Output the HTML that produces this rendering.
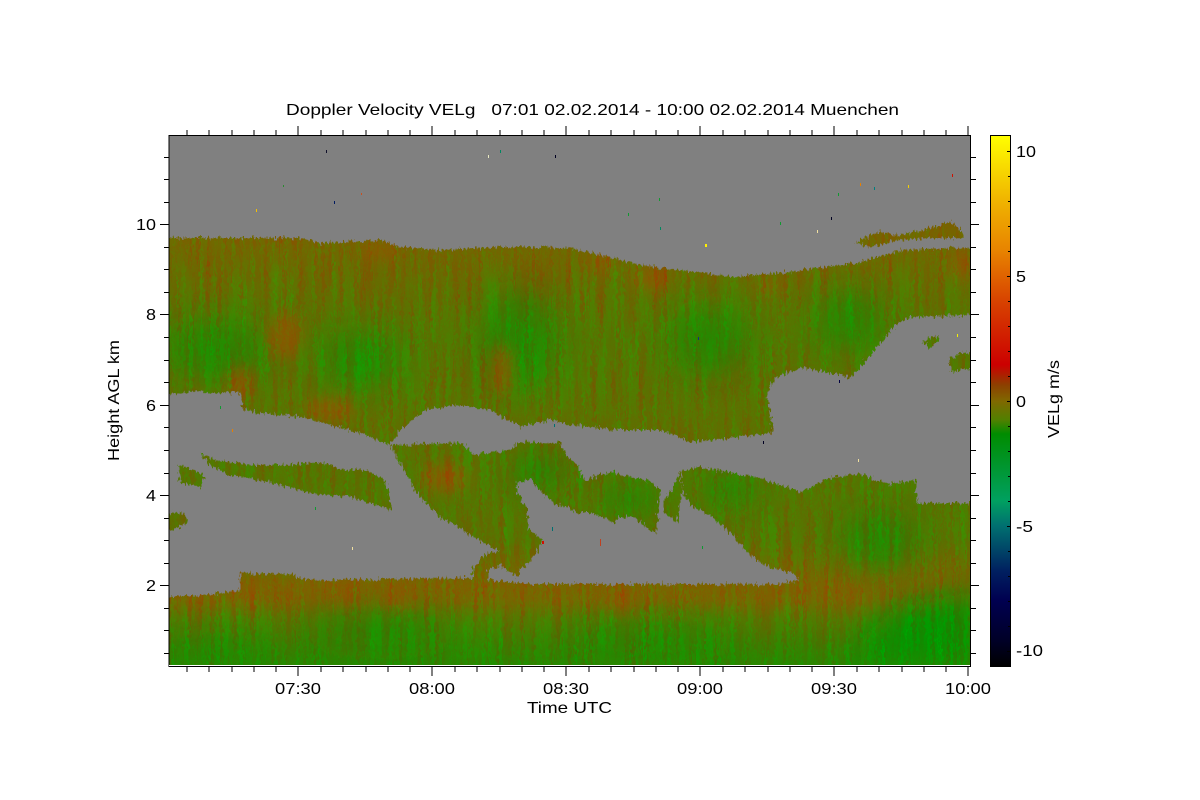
<!DOCTYPE html>
<html>
<head>
<meta charset="utf-8">
<title>Doppler Velocity VELg</title>
<style>
html,body{margin:0;padding:0;background:#fff;width:1200px;height:800px;overflow:hidden}
svg{display:block}
text{font-family:"Liberation Sans",Arial,sans-serif;font-size:16px;fill:#000}
</style>
</head>
<body>
<svg width="1200" height="800" viewBox="0 0 1200 800" xmlns="http://www.w3.org/2000/svg">
<defs>
<linearGradient id="base" gradientUnits="userSpaceOnUse" x1="0" y1="135" x2="0" y2="666">
<stop offset="0" stop-color="#746600"/>
<stop offset="0.198" stop-color="#746600"/>
<stop offset="0.31" stop-color="#5e7100"/>
<stop offset="0.386" stop-color="#527800"/>
<stop offset="0.46" stop-color="#597300"/>
<stop offset="0.556" stop-color="#5d7100"/>
<stop offset="0.65" stop-color="#557500"/>
<stop offset="0.763" stop-color="#587400"/>
<stop offset="0.847" stop-color="#7c6300"/>
<stop offset="0.876" stop-color="#776600"/>
<stop offset="0.913" stop-color="#537800"/>
<stop offset="0.96" stop-color="#3a7f00"/>
<stop offset="1" stop-color="#2a8600"/>
</linearGradient>
<linearGradient id="cb" x1="0" y1="0" x2="0" y2="1">
<stop offset="0" stop-color="#ffff00"/>
<stop offset="0.122" stop-color="#f0b400"/>
<stop offset="0.216" stop-color="#e88400"/>
<stop offset="0.31" stop-color="#d84400"/>
<stop offset="0.432" stop-color="#cc0000"/>
<stop offset="0.47" stop-color="#8c4000"/>
<stop offset="0.5" stop-color="#806800"/>
<stop offset="0.536" stop-color="#508000"/>
<stop offset="0.562" stop-color="#008c00"/>
<stop offset="0.688" stop-color="#00a060"/>
<stop offset="0.735" stop-color="#007070"/>
<stop offset="0.82" stop-color="#002060"/>
<stop offset="0.876" stop-color="#000050"/>
<stop offset="0.95" stop-color="#000028"/>
<stop offset="1" stop-color="#000000"/>
</linearGradient>
<clipPath id="plot"><rect x="169" y="135" width="801" height="531"/></clipPath>
<clipPath id="cloud">
<polygon points="160,238 300,238 320,243 380,240 400,247 440,250 500,247 570,248 600,255 640,265 680,270 735,277 790,272 860,262 900,250 980,247 980,315 910,317 895,325 880,345 850,378 830,373 800,367 775,378 767,393 773,433 740,437 692,442 660,430 620,430 570,425 550,420 520,427 490,410 455,405 425,410 400,430 390,445 360,433 300,417 270,414 243,410 240,393 190,392 160,395"/>
<polygon points="390,445 463,443 473,455 510,450 517,442 560,443 567,457 580,467 583,480 613,472 653,483 660,490 658,513 657,533 650,530 633,517 620,517 613,523 593,513 580,513 553,503 530,480 517,483 517,493 528,510 528,528 543,540 530,563 520,570 517,577 500,565 488,570 488,580 473,580 473,567 487,553 500,552 480,540 440,517 417,493 400,463"/>
<polygon points="673,487 680,470 682,490 677,523 665,513 663,503"/>
<polygon points="160,596 200,596 240,590 240,573 290,574 305,580 470,578 490,580 530,584 780,584 800,580 790,572 770,568 750,555 730,532 705,512 690,505 682,490 682,470 700,467 730,472 760,478 800,492 830,478 860,474 890,484 915,480 918,503 980,503 980,675 160,675"/>
<polygon points="200,453 215,460 250,465 290,465 320,462 345,470 365,470 385,480 392,510 375,505 350,497 320,495 300,490 260,480 230,475 210,465"/>
<polygon points="178,465 195,470 205,478 200,487 180,483"/>
<polygon points="160,515 180,512 190,520 175,530 160,532"/>
<polygon points="855,242 880,232 900,235 930,228 950,222 962,230 962,238 930,238 900,240 870,247"/>
<polygon points="950,358 965,352 980,356 980,368 950,372"/>
<polygon points="922,342 935,335 940,340 930,348"/>
</clipPath>
<filter id="noise" filterUnits="userSpaceOnUse" x="150" y="120" width="850" height="570" color-interpolation-filters="sRGB">
<feTurbulence type="fractalNoise" baseFrequency="0.28 0.012" numOctaves="3" seed="7" result="t"/>
<feColorMatrix in="t" type="matrix" values="1 0 0 0 0  -1 0 0 0 1  0 0 0 0 0.5  0 0 0 0 1" result="n"/>
<feComposite in="SourceGraphic" in2="n" operator="arithmetic" k1="0" k2="1" k3="0.32" k4="-0.16"/>
</filter>
<filter id="rough" filterUnits="userSpaceOnUse" x="150" y="120" width="850" height="570" color-interpolation-filters="sRGB">
<feTurbulence type="fractalNoise" baseFrequency="0.5 0.18" numOctaves="2" seed="3" result="t"/>
<feColorMatrix in="t" type="matrix" values="1 0 0 0 0  0 1 0 0 0  0 0 1 0 0  0 0 0 0 1" result="m"/>
<feDisplacementMap in="SourceGraphic" in2="m" scale="9" xChannelSelector="R" yChannelSelector="G"/>
</filter>
<filter id="b8" x="-100%" y="-100%" width="300%" height="300%"><feGaussianBlur stdDeviation="7"/></filter>
<filter id="b14" filterUnits="userSpaceOnUse" x="100" y="100" width="1000" height="650"><feGaussianBlur stdDeviation="14"/></filter>
</defs>

<rect width="1200" height="800" fill="#fff"/>
<rect x="169" y="135" width="801" height="531" fill="#808080"/>

<g clip-path="url(#plot)">
<g filter="url(#rough)">
<g clip-path="url(#cloud)">
<g filter="url(#noise)">
<rect x="150" y="120" width="850" height="570" fill="url(#base)"/>
<g filter="url(#b14)" fill="#1c8a00" opacity="0.75">
<ellipse cx="850" cy="320" rx="34" ry="30"/>
<ellipse cx="520" cy="340" rx="38" ry="50"/>
<ellipse cx="215" cy="350" rx="50" ry="30"/>
<ellipse cx="360" cy="360" rx="40" ry="28"/>
<ellipse cx="880" cy="540" rx="40" ry="30"/>
<ellipse cx="710" cy="340" rx="40" ry="35"/>
<ellipse cx="540" cy="470" rx="30" ry="20"/>
<ellipse cx="630" cy="500" rx="30" ry="18"/>
<ellipse cx="730" cy="490" rx="28" ry="18"/>
<ellipse cx="380" cy="630" rx="70" ry="16"/>
<ellipse cx="210" cy="654" rx="50" ry="14"/>
<ellipse cx="650" cy="640" rx="80" ry="14"/>
</g>
<g filter="url(#b14)" fill="#0a8f00">
<polygon points="860,640 900,604 980,590 980,670 860,670"/>
</g>
<g fill="#8a5800" filter="url(#b8)" opacity="0.85">
<ellipse cx="503" cy="370" rx="11" ry="26"/>
<ellipse cx="650" cy="278" rx="18" ry="13"/>
<ellipse cx="600" cy="262" rx="15" ry="9"/>
<ellipse cx="240" cy="385" rx="12" ry="18"/>
<ellipse cx="285" cy="335" rx="18" ry="24"/>
<ellipse cx="620" cy="598" rx="15" ry="12"/>
<ellipse cx="400" cy="595" rx="15" ry="11"/>
<ellipse cx="340" cy="592" rx="12" ry="10"/>
<ellipse cx="250" cy="592" rx="15" ry="8"/>
<ellipse cx="330" cy="410" rx="25" ry="13"/>
<ellipse cx="445" cy="478" rx="25" ry="15"/>
<ellipse cx="770" cy="285" rx="12" ry="8"/>
<ellipse cx="960" cy="265" rx="12" ry="16"/>
<ellipse cx="380" cy="250" rx="20" ry="10"/>
</g>
</g>
</g>
</g>
<g>
<rect x="326" y="150" width="1" height="3" fill="#10102a"/>
<rect x="488" y="155" width="1" height="3" fill="#e8e8c0"/>
<rect x="500" y="150" width="1" height="3" fill="#008860"/>
<rect x="555" y="155" width="1" height="3" fill="#000020"/>
<rect x="283" y="185" width="1" height="2" fill="#2a8a30"/>
<rect x="334" y="201" width="1" height="3" fill="#001a60"/>
<rect x="361" y="193" width="1" height="2" fill="#c85020"/>
<rect x="256" y="209" width="1" height="3" fill="#f4c000"/>
<rect x="659" y="198" width="1" height="3" fill="#109a30"/>
<rect x="628" y="213" width="1" height="3" fill="#109a30"/>
<rect x="705" y="244" width="2" height="3" fill="#fff000"/>
<rect x="860" y="183" width="1" height="3" fill="#e88000"/>
<rect x="874" y="187" width="1" height="3" fill="#008080"/>
<rect x="908" y="185" width="1" height="3" fill="#f4d000"/>
<rect x="952" y="174" width="1" height="3" fill="#d01000"/>
<rect x="780" y="222" width="1" height="3" fill="#109a30"/>
<rect x="817" y="230" width="1" height="3" fill="#f0e0a0"/>
<rect x="838" y="193" width="1" height="3" fill="#109a30"/>
<rect x="831" y="217" width="1" height="3" fill="#000020"/>
<rect x="660" y="227" width="1" height="3" fill="#008860"/>
<rect x="957" y="334" width="1" height="3" fill="#f4f000"/>
<rect x="698" y="337" width="1" height="3" fill="#103080"/>
<rect x="763" y="441" width="1" height="3" fill="#000020"/>
<rect x="554" y="424" width="1" height="3" fill="#007070"/>
<rect x="552" y="527" width="1" height="4" fill="#007070"/>
<rect x="600" y="539" width="1" height="7" fill="#c04020"/>
<rect x="702" y="546" width="1" height="3" fill="#109a30"/>
<rect x="839" y="380" width="1" height="3" fill="#000040"/>
<rect x="858" y="459" width="1" height="3" fill="#f0e0a0"/>
<rect x="220" y="406" width="1" height="3" fill="#109a30"/>
<rect x="232" y="429" width="1" height="3" fill="#e88000"/>
<rect x="352" y="547" width="1" height="3" fill="#f0e0a0"/>
<rect x="315" y="507" width="1" height="3" fill="#109a30"/>
<rect x="542" y="541" width="2" height="3" fill="#d01000"/>
</g>
</g>

<!-- plot frame -->
<rect x="169" y="135.5" width="801.5" height="531" fill="none" stroke="#000" stroke-width="1"/>
<line x1="169" y1="665.5" x2="970" y2="665.5" stroke="#fff" stroke-width="1"/>
<path stroke="#000" stroke-width="1" fill="none" shape-rendering="crispEdges" d="
M187 135v-5M209 135v-5M232 135v-5M254 135v-5M276 135v-5M298 135v-9M321 135v-5M343 135v-5M366 135v-5M388 135v-5M410 135v-5M432 135v-9M455 135v-5M477 135v-5M500 135v-5M522 135v-5M544 135v-5M566 135v-9M589 135v-5M611 135v-5M634 135v-5M656 135v-5M678 135v-5M700 135v-9M723 135v-5M745 135v-5M768 135v-5M790 135v-5M812 135v-5M834 135v-9M857 135v-5M879 135v-5M902 135v-5M924 135v-5M946 135v-5M968 135v-9
M187 667v5M209 667v5M232 667v5M254 667v5M276 667v5M298 667v9M321 667v5M343 667v5M366 667v5M388 667v5M410 667v5M432 667v9M455 667v5M477 667v5M500 667v5M522 667v5M544 667v5M566 667v9M589 667v5M611 667v5M634 667v5M656 667v5M678 667v5M700 667v9M723 667v5M745 667v5M768 667v5M790 667v5M812 667v5M834 667v9M857 667v5M879 667v5M902 667v5M924 667v5M946 667v5M968 667v9
M169 157.5h-5M169 179.5h-5M169 202.5h-5M169 224.5h-9M169 247.5h-5M169 269.5h-5M169 292.5h-5M169 314.5h-9M169 337.5h-5M169 360.5h-5M169 382.5h-5M169 405.5h-9M169 427.5h-5M169 450.5h-5M169 473.5h-5M169 495.5h-9M169 518.5h-5M169 540.5h-5M169 563.5h-5M169 585.5h-9M169 608.5h-5M169 630.5h-5M169 653.5h-5
M971 157.5h5M971 179.5h5M971 202.5h5M971 224.5h8M971 247.5h5M971 269.5h5M971 292.5h5M971 314.5h8M971 337.5h5M971 360.5h5M971 382.5h5M971 405.5h8M971 427.5h5M971 450.5h5M971 473.5h5M971 495.5h8M971 518.5h5M971 540.5h5M971 563.5h5M971 585.5h8M971 608.5h5M971 630.5h5M971 653.5h5"/>

<!-- colorbar -->
<rect x="990.5" y="135.5" width="20" height="531" fill="url(#cb)" stroke="#000" stroke-width="1"/>
<path stroke="#000" stroke-width="1" shape-rendering="crispEdges" d="M1007 151.5h3M1008 176.5h2M1008 201.5h2M1008 226.5h2M1008 251.5h2M1007 276.5h3M1008 301.5h2M1008 326.5h2M1008 351.5h2M1008 376.5h2M1007 401.5h3M1008 426.5h2M1008 451.5h2M1008 476.5h2M1008 501.5h2M1007 526.5h3M1008 551.5h2M1008 576.5h2M1008 601.5h2M1008 626.5h2M1007 651.5h3"/>

<!-- text -->
<text x="286" y="115" textLength="613" lengthAdjust="spacingAndGlyphs" xml:space="preserve">Doppler Velocity VELg   07:01 02.02.2014 - 10:00 02.02.2014 Muenchen</text>

<text x="136" y="230" textLength="20" lengthAdjust="spacingAndGlyphs">10</text>
<text x="146" y="320" textLength="10" lengthAdjust="spacingAndGlyphs">8</text>
<text x="146" y="411" textLength="10" lengthAdjust="spacingAndGlyphs">6</text>
<text x="146" y="501" textLength="10" lengthAdjust="spacingAndGlyphs">4</text>
<text x="146" y="591" textLength="10" lengthAdjust="spacingAndGlyphs">2</text>

<text x="275" y="694" textLength="46" lengthAdjust="spacingAndGlyphs">07:30</text>
<text x="409" y="694" textLength="46" lengthAdjust="spacingAndGlyphs">08:00</text>
<text x="543" y="694" textLength="46" lengthAdjust="spacingAndGlyphs">08:30</text>
<text x="677" y="694" textLength="46" lengthAdjust="spacingAndGlyphs">09:00</text>
<text x="811" y="694" textLength="46" lengthAdjust="spacingAndGlyphs">09:30</text>
<text x="945" y="694" textLength="46" lengthAdjust="spacingAndGlyphs">10:00</text>

<text x="527" y="713" textLength="85" lengthAdjust="spacingAndGlyphs">Time UTC</text>

<text transform="translate(119,461) rotate(-90)" textLength="121" lengthAdjust="spacingAndGlyphs">Height AGL km</text>
<text transform="translate(1059,438) rotate(-90)" textLength="78" lengthAdjust="spacingAndGlyphs">VELg m/s</text>

<text x="1016" y="157" textLength="20" lengthAdjust="spacingAndGlyphs">10</text>
<text x="1016" y="282" textLength="10" lengthAdjust="spacingAndGlyphs">5</text>
<text x="1016" y="407" textLength="10" lengthAdjust="spacingAndGlyphs">0</text>
<text x="1016" y="532" textLength="17" lengthAdjust="spacingAndGlyphs">-5</text>
<text x="1016" y="656" textLength="27" lengthAdjust="spacingAndGlyphs">-10</text>
</svg>
</body>
</html>
